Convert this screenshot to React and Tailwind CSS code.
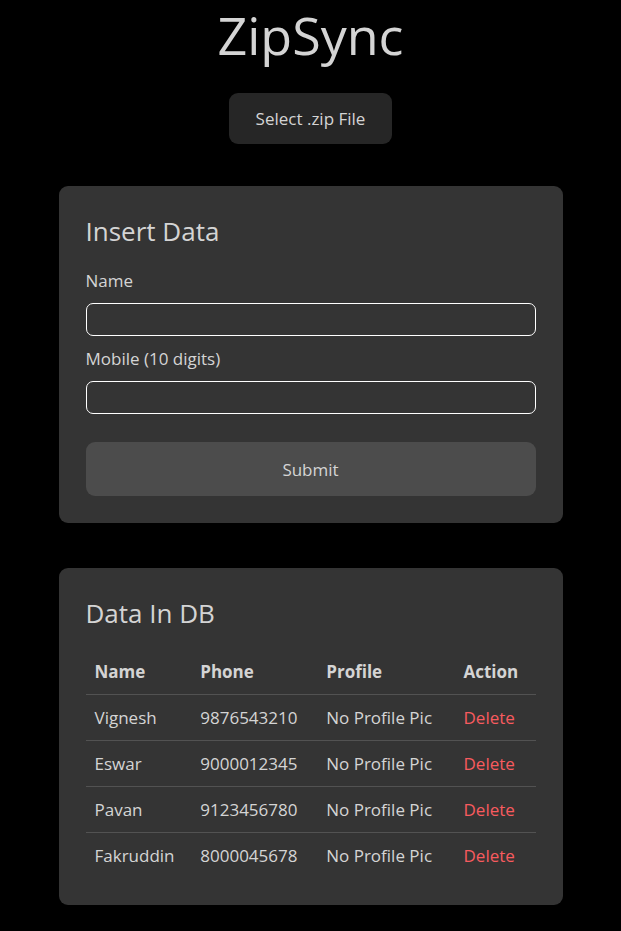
import React from "react";

const rows = [
  { name: "Vignesh", phone: "9876543210" },
  { name: "Eswar", phone: "9000012345" },
  { name: "Pavan", phone: "9123456780" },
  { name: "Fakruddin", phone: "8000045678" },
];

function Card({ title, children }) {
  return (
    <section className="w-full max-w-[504px] rounded-[9px] bg-[#343434] p-[27px]">
      <h2 className="mb-[18px] text-[26px] leading-9">{title}</h2>
      {children}
    </section>
  );
}

function Field({ id, label, type }) {
  return (
    <div>
      <label htmlFor={id} className="mb-[9px] block">
        {label}
      </label>
      <input
        id={id}
        name={id}
        type={type}
        className="block h-[33px] w-full rounded-[7px] border border-white bg-transparent px-2 outline-none"
      />
    </div>
  );
}

function InsertForm() {
  return (
    <form onSubmit={(event) => event.preventDefault()}>
      <div className="flex flex-col gap-[9px]">
        <Field id="name" label="Name" type="text" />
        <Field id="mobile" label="Mobile (10 digits)" type="tel" />
      </div>
      <button type="submit" className="mt-7 h-[54px] w-full rounded-[9px] bg-[#4c4c4c]">
        Submit
      </button>
    </form>
  );
}

function DataTable() {
  return (
    <table className="w-full table-fixed border-collapse whitespace-nowrap text-left">
      <colgroup>
        <col className="w-[23.5%]" />
        <col className="w-[28%]" />
        <col className="w-[30.5%]" />
        <col className="w-[18%]" />
      </colgroup>
      <thead>
        <tr className="h-[45px] border-b border-[#525252]">
          <th className="px-[9px] font-bold">Name</th>
          <th className="px-[9px] font-bold">Phone</th>
          <th className="px-[9px] font-bold">Profile</th>
          <th className="px-[9px] font-bold">Action</th>
        </tr>
      </thead>
      <tbody>
        {rows.map((row) => (
          <tr key={row.phone} className="h-[46px] border-b border-[#525252] last:border-b-0">
            <td className="px-[9px]">{row.name}</td>
            <td className="px-[9px]">{row.phone}</td>
            <td className="px-[9px]">No Profile Pic</td>
            <td className="px-[9px]">
              <button type="button" className="text-[#f85b5f]">
                Delete
              </button>
            </td>
          </tr>
        ))}
      </tbody>
    </table>
  );
}

export default function App() {
  return (
    <main className="flex min-h-screen flex-col items-center bg-black px-4 pt-2 pb-6 font-['Segoe_UI','Open_Sans',sans-serif] text-[17px] leading-[27px] text-[#d4d4d4]">
      <h1 className="text-[52px] leading-[54px]">ZipSync</h1>
      <button type="button" className="mt-[31px] h-[51px] rounded-[9px] bg-[#262626] px-[27px]">
        Select .zip File
      </button>
      <div className="mt-[42px] flex w-full flex-col items-center gap-[45px]">
        <Card title="Insert Data">
          <InsertForm />
        </Card>
        <Card title="Data In DB">
          <DataTable />
        </Card>
      </div>
    </main>
  );
}
